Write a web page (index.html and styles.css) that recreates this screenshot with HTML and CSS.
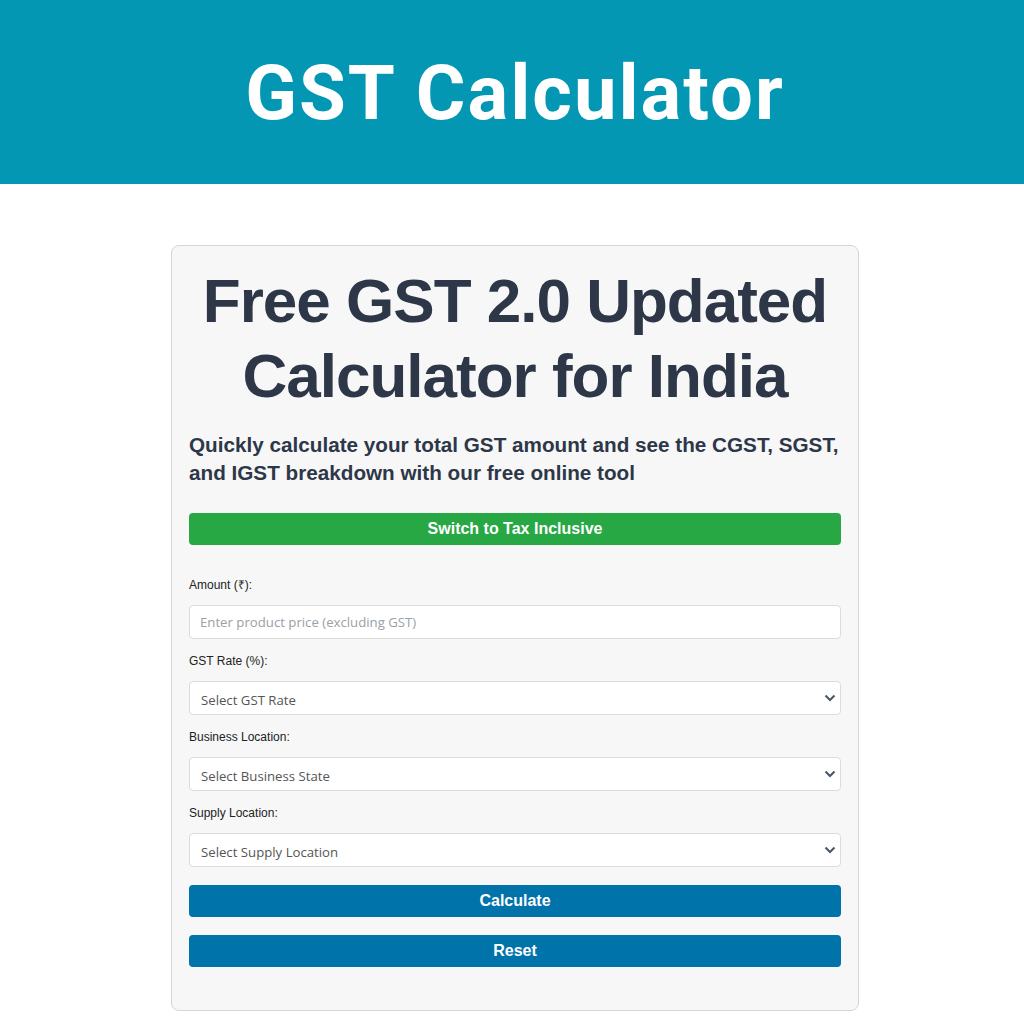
FILE: index.html
```html
<!DOCTYPE html>
<html lang="en">
<head>
<meta charset="utf-8">
<title>GST Calculator</title>
<link rel="stylesheet" href="styles.css">
</head>
<body>
<header class="site-header">
  <h1 class="site-title">GST Calculator</h1>
</header>
<main class="page">
  <section class="card">
    <h2 class="card-title">Free GST 2.0 Updated Calculator for India</h2>
    <p class="card-sub">Quickly calculate your total GST amount and see the CGST, SGST, and IGST breakdown with our free online tool</p>
    <button class="btn btn-green" type="button">Switch to Tax Inclusive</button>
    <div class="fields">
      <div class="field">
        <label class="label">Amount (₹):</label>
        <input class="control input" type="text" placeholder="Enter product price (excluding GST)">
      </div>
      <div class="field">
        <label class="label">GST Rate (%):</label>
        <div class="select-wrap">
          <select class="control select"><option>Select GST Rate</option></select>
          <svg class="chev" width="12" height="8" viewBox="0 0 12 8"><path d="M1.5 1.5 L6 6 L10.5 1.5" fill="none" stroke="#4a5568" stroke-width="2"/></svg>
        </div>
      </div>
      <div class="field">
        <label class="label">Business Location:</label>
        <div class="select-wrap">
          <select class="control select"><option>Select Business State</option></select>
          <svg class="chev" width="12" height="8" viewBox="0 0 12 8"><path d="M1.5 1.5 L6 6 L10.5 1.5" fill="none" stroke="#4a5568" stroke-width="2"/></svg>
        </div>
      </div>
      <div class="field">
        <label class="label">Supply Location:</label>
        <div class="select-wrap">
          <select class="control select"><option>Select Supply Location</option></select>
          <svg class="chev" width="12" height="8" viewBox="0 0 12 8"><path d="M1.5 1.5 L6 6 L10.5 1.5" fill="none" stroke="#4a5568" stroke-width="2"/></svg>
        </div>
      </div>
    </div>
    <button class="btn btn-blue" type="button">Calculate</button>
    <button class="btn btn-blue" type="button">Reset</button>
  </section>
</main>
</body>
</html>
```

FILE: styles.css
```css
* { box-sizing: border-box; }
html, body { margin: 0; padding: 0; background: #ffffff; }
body { font-family: "Liberation Sans", Arial, sans-serif; }

.site-header {
  background: #0397b3;
  height: 184px;
  display: flex;
  align-items: center;
  justify-content: center;
}
.site-title {
  margin: 0;
  color: #ffffff;
  font-family: Roboto, "Noto Sans", sans-serif;
  font-weight: 700;
  font-size: 76px;
  letter-spacing: 2px;
  line-height: 1;
  padding-top: 2px;
  padding-left: 6px;
}

.page {
  display: flex;
  justify-content: center;
  padding-top: 61px;
  padding-left: 6px;
}
.card {
  width: 688px;
  background: #f7f7f7;
  border: 1px solid #d6d6d6;
  border-radius: 8px;
  padding: 17px;
  display: flex;
  flex-direction: column;
}
.card-title {
  margin: 0 -10px;
  text-align: center;
  color: #2d3748;
  font-size: 62px;
  letter-spacing: -1px;
  line-height: 75px;
  font-weight: 700;
}
.card-sub {
  margin: 18px 0 0 0;
  color: #2d3748;
  font-size: 20.7px;
  line-height: 28px;
  font-weight: 700;
}
.btn {
  display: block;
  width: 100%;
  height: 32px;
  border: none;
  border-radius: 4px;
  color: #ffffff;
  font-family: "Liberation Sans", Arial, sans-serif;
  font-weight: 700;
  font-size: 16px;
  padding: 0;
}
.btn-green {
  background: #28a745;
  margin-top: 26px;
}
.btn-blue {
  background: #0073aa;
  margin-top: 18px;
}
.btn-blue:last-child { margin-bottom: 26px; }

.fields {
  margin-top: 33px;
  display: flex;
  flex-direction: column;
  gap: 15px;
}
.field { display: flex; flex-direction: column; }
.label {
  font-size: 12px;
  line-height: 14px;
  color: #222222;
  margin-bottom: 13px;
}
.control {
  width: 100%;
  height: 34px;
  border: 1px solid #dcdcdc;
  border-radius: 4px;
  background: #ffffff;
  font-family: "Open Sans", sans-serif;
  font-size: 13.2px;
  color: #555555;
  margin: 0;
}
.input { padding: 0 10px; }
.input::placeholder { color: #9aa0a6; }
.select-wrap { position: relative; }
.select {
  appearance: none;
  -webkit-appearance: none;
  padding: 4px 12px 0 11px;
}
.chev {
  position: absolute;
  right: 5px;
  top: 13px;
  pointer-events: none;
}
```
